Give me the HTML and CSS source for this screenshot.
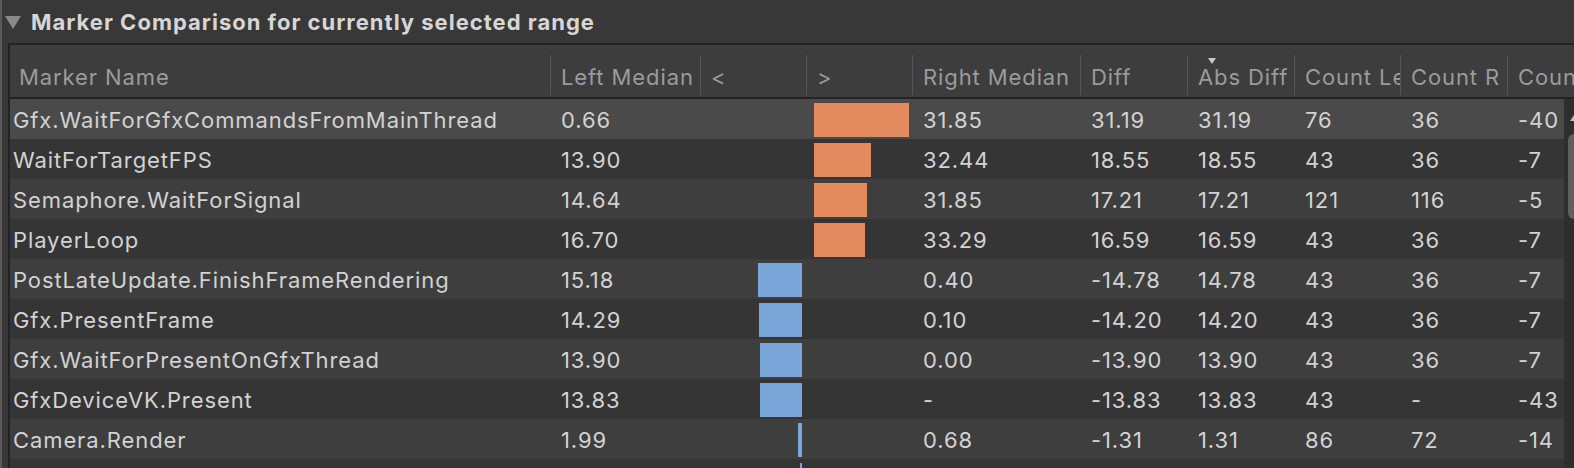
FILE: index.html
```html
<!DOCTYPE html>
<html>
<head>
<meta charset="utf-8">
<link rel="stylesheet" href="styles.css">
</head>
<body>
<div class="panel">
  <div class="title"><span class="tri"></span><span class="title-text">Marker Comparison for currently selected range</span></div>
  <div class="table">
    <div class="thead">
      <div class="th first">Marker Name</div>
      <div class="th">Left Median</div>
      <div class="th">&lt;</div>
      <div class="th">&gt;</div>
      <div class="th">Right Median</div>
      <div class="th">Diff</div>
      <div class="th sorted"><span class="sort-arrow"></span>Abs Diff</div>
      <div class="th">Count Left</div>
      <div class="th">Count R</div>
      <div class="th">Count Delta</div>
    </div>
    <div class="tbody">
      <div class="rows">
        <div class="row selected">
          <div class="td first">Gfx.WaitForGfxCommandsFromMainThread</div>
          <div class="td">0.66</div>
          <div class="td bar-left"></div>
          <div class="td bar-right"><span class="bar more" style="width:95px"></span></div>
          <div class="td">31.85</div>
          <div class="td">31.19</div>
          <div class="td">31.19</div>
          <div class="td">76</div>
          <div class="td">36</div>
          <div class="td">-40</div>
        </div>
        <div class="row">
          <div class="td first">WaitForTargetFPS</div>
          <div class="td">13.90</div>
          <div class="td bar-left"></div>
          <div class="td bar-right"><span class="bar more" style="width:57px"></span></div>
          <div class="td">32.44</div>
          <div class="td">18.55</div>
          <div class="td">18.55</div>
          <div class="td">43</div>
          <div class="td">36</div>
          <div class="td">-7</div>
        </div>
        <div class="row">
          <div class="td first">Semaphore.WaitForSignal</div>
          <div class="td">14.64</div>
          <div class="td bar-left"></div>
          <div class="td bar-right"><span class="bar more" style="width:53px"></span></div>
          <div class="td">31.85</div>
          <div class="td">17.21</div>
          <div class="td">17.21</div>
          <div class="td">121</div>
          <div class="td">116</div>
          <div class="td">-5</div>
        </div>
        <div class="row">
          <div class="td first">PlayerLoop</div>
          <div class="td">16.70</div>
          <div class="td bar-left"></div>
          <div class="td bar-right"><span class="bar more" style="width:51px"></span></div>
          <div class="td">33.29</div>
          <div class="td">16.59</div>
          <div class="td">16.59</div>
          <div class="td">43</div>
          <div class="td">36</div>
          <div class="td">-7</div>
        </div>
        <div class="row">
          <div class="td first">PostLateUpdate.FinishFrameRendering</div>
          <div class="td">15.18</div>
          <div class="td bar-left"><span class="bar less" style="width:44px"></span></div>
          <div class="td bar-right"></div>
          <div class="td">0.40</div>
          <div class="td">-14.78</div>
          <div class="td">14.78</div>
          <div class="td">43</div>
          <div class="td">36</div>
          <div class="td">-7</div>
        </div>
        <div class="row">
          <div class="td first">Gfx.PresentFrame</div>
          <div class="td">14.29</div>
          <div class="td bar-left"><span class="bar less" style="width:43px"></span></div>
          <div class="td bar-right"></div>
          <div class="td">0.10</div>
          <div class="td">-14.20</div>
          <div class="td">14.20</div>
          <div class="td">43</div>
          <div class="td">36</div>
          <div class="td">-7</div>
        </div>
        <div class="row">
          <div class="td first">Gfx.WaitForPresentOnGfxThread</div>
          <div class="td">13.90</div>
          <div class="td bar-left"><span class="bar less" style="width:42px"></span></div>
          <div class="td bar-right"></div>
          <div class="td">0.00</div>
          <div class="td">-13.90</div>
          <div class="td">13.90</div>
          <div class="td">43</div>
          <div class="td">36</div>
          <div class="td">-7</div>
        </div>
        <div class="row">
          <div class="td first">GfxDeviceVK.Present</div>
          <div class="td">13.83</div>
          <div class="td bar-left"><span class="bar less" style="width:42px"></span></div>
          <div class="td bar-right"></div>
          <div class="td">-</div>
          <div class="td">-13.83</div>
          <div class="td">13.83</div>
          <div class="td">43</div>
          <div class="td">-</div>
          <div class="td">-43</div>
        </div>
        <div class="row">
          <div class="td first">Camera.Render</div>
          <div class="td">1.99</div>
          <div class="td bar-left"><span class="bar less" style="width:4px"></span></div>
          <div class="td bar-right"></div>
          <div class="td">0.68</div>
          <div class="td">-1.31</div>
          <div class="td">1.31</div>
          <div class="td">86</div>
          <div class="td">72</div>
          <div class="td">-14</div>
        </div>
        <div class="row">
          <div class="td first"></div>
          <div class="td"></div>
          <div class="td bar-left"><span class="bar less" style="width:2px"></span></div>
          <div class="td bar-right"></div>
          <div class="td"></div>
          <div class="td"></div>
          <div class="td"></div>
          <div class="td"></div>
          <div class="td"></div>
          <div class="td"></div>
        </div>
      </div>
      <div class="scrollbar">
        <span class="scroll-up"></span>
        <span class="thumb"></span>
      </div>
    </div>
  </div>
</div>
</body>
</html>
```
FILE: styles.css
```css
html, body {
  margin: 0;
  padding: 0;
  height: 468px;
  overflow: hidden;
  background: #383838;
}

.panel {
  height: 468px;
  border-left: 2px solid #5a5a5a;
  box-sizing: border-box;
  font-family: Inter, "Noto Sans", sans-serif;
  color: #d2d2d2;
  display: flex;
  flex-direction: column;
}

.title {
  height: 43px;
  display: flex;
  align-items: center;
  padding-left: 3px;
  gap: 10px;
}

.tri {
  width: 0;
  height: 0;
  border-left: 8px solid transparent;
  border-right: 8px solid transparent;
  border-top: 13px solid #8a8a8a;
  margin-top: 1px;
}

.title-text {
  font-weight: 700;
  font-size: 22px;
  letter-spacing: 1px;
  color: #d6d6d6;
}

.table {
  margin-left: 6px;
  border-left: 2px solid #232323;
  border-top: 2px solid #232323;
  flex: 1;
  display: flex;
  flex-direction: column;
  min-height: 0;
}

.thead,
.row {
  display: grid;
  grid-template-columns: 541px 150px 106px 106px 168px 107px 107px 106px 107px 1fr;
}

.thead {
  height: 52px;
  background: #3d3d3d;
  border-bottom: 2px solid #232323;
  overflow: hidden;
}

.th {
  position: relative;
  display: flex;
  align-items: center;
  padding: 12px 0 0 10px;
  font-size: 22px;
  letter-spacing: 0.9px;
  color: #9b9b9b;
  white-space: nowrap;
  overflow: hidden;
}

.th::after {
  content: "";
  position: absolute;
  right: 0;
  top: 10px;
  bottom: 2px;
  width: 1px;
  background: #555555;
}

.th:last-child::after {
  display: none;
}

.th.first {
  padding-left: 9px;
}

.sort-arrow {
  position: absolute;
  left: 20px;
  top: 13px;
  width: 0;
  height: 0;
  border-left: 4px solid transparent;
  border-right: 4px solid transparent;
  border-top: 6px solid #c8c8c8;
}

.tbody {
  flex: 1;
  display: flex;
  min-height: 0;
  overflow: hidden;
}

.rows {
  flex: 1;
  display: flex;
  flex-direction: column;
}

.row {
  flex: 0 0 40px;
  height: 40px;
  background: #3e3e3e;
}

.row:nth-child(even) {
  background: #353535;
}

.row.selected {
  background: #4a4a4a;
}

.td {
  display: flex;
  align-items: center;
  padding: 2px 0 0 10px;
  font-size: 22px;
  letter-spacing: 0.9px;
  white-space: nowrap;
  overflow: hidden;
}

.td.first {
  padding-left: 3px;
}

.bar-left {
  justify-content: flex-end;
  padding: 4px 5px 2px 0;
  align-items: stretch;
}

.bar-right {
  justify-content: flex-start;
  padding: 4px 0 2px 7px;
  align-items: stretch;
}

.bar {
  display: block;
}

.bar.more {
  background: #e38b5f;
}

.bar.less {
  background: #79a5d8;
}

.scrollbar {
  width: 10px;
  background: #2e2e2e;
  position: relative;
  overflow: hidden;
}

.scroll-up {
  position: absolute;
  left: 6px;
  top: 16px;
  width: 0;
  height: 0;
  border-left: 4px solid transparent;
  border-right: 4px solid transparent;
  border-bottom: 6px solid #bcbcbc;
}

.thumb {
  position: absolute;
  left: 4px;
  top: 35px;
  width: 14px;
  height: 85px;
  border-radius: 6px;
  background: #5f5f5f;
}
```
